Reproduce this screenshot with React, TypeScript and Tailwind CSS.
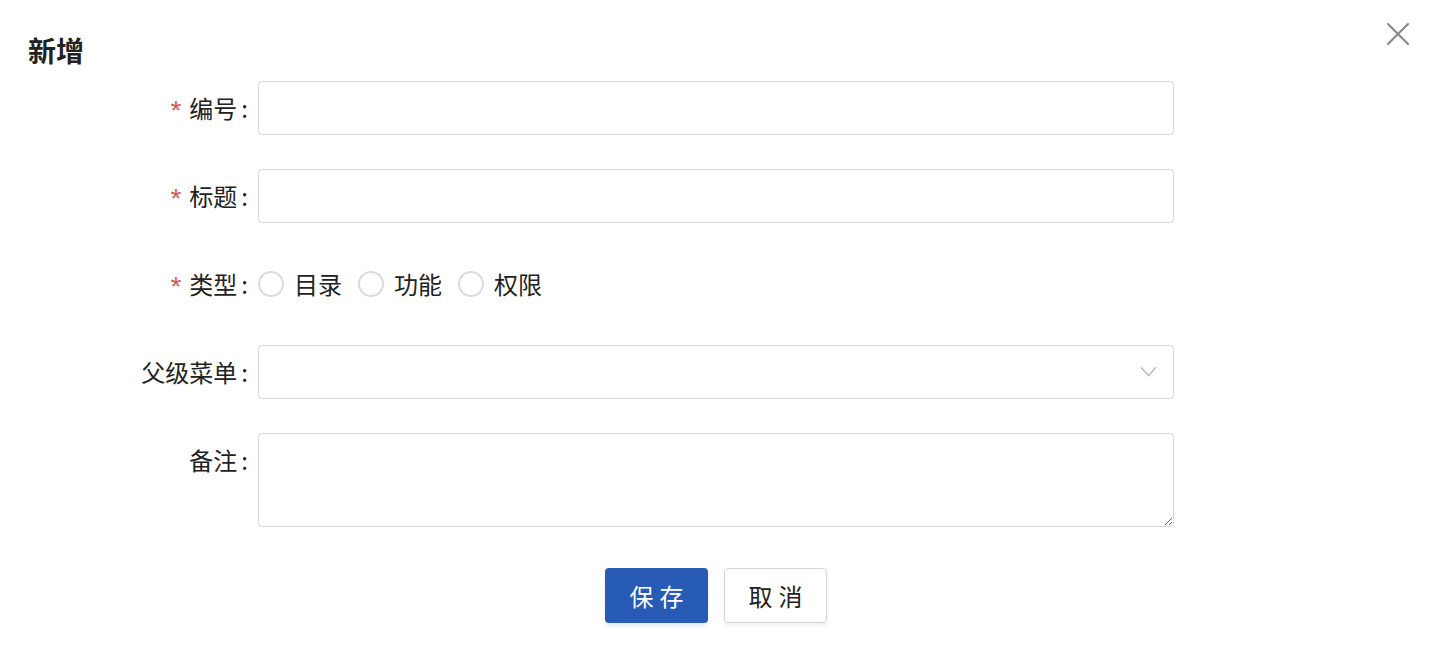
import React, { useState } from 'react';

const font = { fontFamily: '"Noto Sans CJK SC", "Noto Sans", sans-serif' };

function Label({ text, required }: { text: string; required?: boolean }) {
  return (
    <div className="w-[258px] h-[54px] pr-[10px] flex items-center justify-end text-[24px] text-[#222]">
      {required && (
        <span className="text-[#e05550] mr-[8px] text-[28px] leading-none pt-[6px]" style={{ fontFamily: '"Liberation Sans", sans-serif' }}>
          *
        </span>
      )}
      <span>{text}</span>
      <span className="ml-[4px]">:</span>
    </div>
  );
}

export default function App() {
  const [kind, setKind] = useState('');
  const types = ['目录', '功能', '权限'];

  return (
    <div className="relative w-[1434px] h-[654px] bg-white" style={font}>
      <button className="absolute right-[24px] top-[22px] w-[24px] h-[24px] text-[#8a8a8a]">
        <svg viewBox="0 0 24 24" className="w-[24px] h-[24px]" fill="none" stroke="currentColor" strokeWidth="2.2" strokeLinecap="round">
          <path d="M2 2 L22 22 M22 2 L2 22" />
        </svg>
      </button>

      <div className="pl-[28px] pt-[30px] h-[70px] text-[28px] leading-[40px] font-bold text-[#222]">新增</div>

      <div className="mt-[11px] flex flex-col gap-[34px]">
        <div className="flex items-center">
          <Label text="编号" required />
          <input className="w-[916px] h-[54px] border border-[#d6d6d6] rounded-[4px] px-3 text-[22px] outline-none" />
        </div>

        <div className="flex items-center">
          <Label text="标题" required />
          <input className="w-[916px] h-[54px] border border-[#d6d6d6] rounded-[4px] px-3 text-[22px] outline-none" />
        </div>

        <div className="flex items-center h-[54px]">
          <Label text="类型" required />
          <div className="flex items-center text-[24px] text-[#222]">
            {types.map((t) => (
              <label key={t} className="flex items-center mr-[16px] cursor-pointer" onClick={() => setKind(t)}>
                <span className="w-[26px] h-[26px] rounded-full border-2 border-[#dadada] bg-white flex items-center justify-center">
                  {kind === t && <span className="w-[12px] h-[12px] rounded-full bg-[#285bb5]" />}
                </span>
                <span className="ml-[10px]">{t}</span>
              </label>
            ))}
          </div>
        </div>

        <div className="flex items-center">
          <Label text="父级菜单" />
          <div className="relative w-[916px] h-[54px] border border-[#d6d6d6] rounded-[4px] bg-white">
            <svg viewBox="0 0 18 12" className="absolute right-[16px] top-[20px] w-[17px] h-[12px]" fill="none" stroke="#b8b8b8" strokeWidth="1.4">
              <path d="M1 1 L9 10 L17 1" />
            </svg>
          </div>
        </div>

        <div className="flex items-start">
          <Label text="备注" />
          <textarea className="w-[916px] h-[94px] border border-[#d6d6d6] rounded-[4px] px-3 py-2 text-[22px] outline-none" />
        </div>
      </div>

      <div className="ml-[258px] w-[916px] mt-[41px] flex justify-center gap-[16px]">
        <button className="w-[103px] h-[55px] rounded-[4px] bg-[#285bb5] text-white text-[24px] tracking-[6px] pl-[6px] shadow-[0_3px_4px_rgba(40,91,181,0.12)]">
          保存
        </button>
        <button className="w-[103px] h-[55px] rounded-[4px] bg-white border border-[#d4d4d4] text-[#222] text-[24px] tracking-[6px] pl-[6px] shadow-[0_3px_4px_rgba(0,0,0,0.06)]">
          取消
        </button>
      </div>
    </div>
  );
}
